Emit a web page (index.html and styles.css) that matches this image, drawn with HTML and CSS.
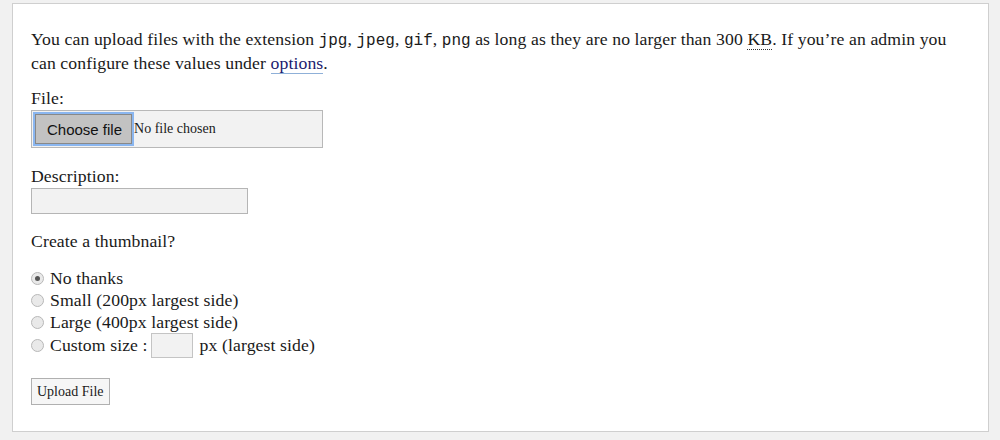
FILE: index.html
```html
<!DOCTYPE html>
<html>
<head>
<meta charset="utf-8">
<link rel="stylesheet" href="styles.css">
</head>
<body>
<div class="panel">
  <p class="intro">You can upload files with the extension <code>jpg</code>, <code>jpeg</code>, <code>gif</code>, <code>png</code> as long as they are no larger than 300 <abbr title="Kilobytes">KB</abbr>. If you’re an admin you<br>can configure these values under <a href="#">options</a>.</p>
  <div class="field field-file">
    <div class="label">File:</div>
    <div class="file-box"><span class="file-btn">Choose file</span><span class="file-name">No file chosen</span></div>
  </div>
  <div class="field field-desc">
    <div class="label">Description:</div>
    <div class="text-input"></div>
  </div>
  <div class="question">Create a thumbnail?</div>
  <div class="radios">
    <div class="radio-row"><span class="radio checked"></span>No thanks</div>
    <div class="radio-row"><span class="radio"></span>Small (200px largest side)</div>
    <div class="radio-row"><span class="radio"></span>Large (400px largest side)</div>
    <div class="radio-row"><span class="radio"></span>Custom size : <span class="size-input"></span>px (largest side)</div>
  </div>
  <div class="submit">Upload File</div>
</div>
</body>
</html>
```
FILE: styles.css
```css
html, body { margin: 0; padding: 0; }
body {
  background: #f1f1f1;
  font-family: "Liberation Serif", "DejaVu Serif", serif;
  font-size: 17.7px;
  letter-spacing: 0.1px;
  color: #1a1a1a;
  padding: 3px 11px 0 12px;
  height: 440px;
  box-sizing: border-box;
}
.panel {
  background: #fff;
  border: 1px solid #cfcfcf;
  height: 429px;
  box-sizing: border-box;
  padding: 24px 18px 0 18px;
}
.intro {
  margin: 0;
  line-height: 22px;
  white-space: nowrap;
}
code {
  font-family: "Liberation Mono", monospace;
  font-size: 16px;
  letter-spacing: 0;
}
abbr {
  text-decoration: none;
  border-bottom: 1px dotted #333;
}
a {
  color: #1b1b6e;
  text-decoration: none;
  border-bottom: 1px solid #8fb0d8;
}
.field-file { margin-top: 13px; }
.field-file .label { margin-bottom: 1px; }
.field-desc { margin-top: 17px; }
.label { line-height: 22px; }
.file-box {
  display: flex;
  align-items: center;
  width: 292px;
  height: 38px;
  box-sizing: border-box;
  background: #f2f2f2;
  border: 1px solid #b8b8b8;
  padding-left: 2px;
}
.file-btn {
  font-family: "Liberation Sans", sans-serif;
  font-size: 15px;
  letter-spacing: 0;
  background: #c2c2c2;
  border: 1px solid #888;
  box-shadow: 0 0 0 2px #8ab6f0;
  height: 30px;
  line-height: 30px;
  padding: 0 9px 0 11px;
  box-sizing: border-box;
  color: #111;
  margin-left: 1px;
}
.file-name {
  font-size: 14px;
  letter-spacing: 0;
  margin-left: 2px;
}
.text-input {
  width: 217px;
  height: 26px;
  box-sizing: border-box;
  background: #f2f2f2;
  border: 1px solid #b5b5b5;
  margin-top: 1px;
}
.question {
  margin-top: 16px;
  line-height: 22px;
}
.radios { margin-top: 15px; }
.radio-row {
  display: flex;
  align-items: center;
  height: 22px;
}
.radio-row:last-child { height: 24px; }
.radio {
  width: 11px;
  height: 11px;
  border-radius: 50%;
  border: 1px solid #b8b8b8;
  background: #e9e9e9;
  margin: 0 6px 0 0;
  box-sizing: content-box;
  position: relative;
}
.radio.checked::after {
  content: "";
  position: absolute;
  left: 3px;
  top: 3px;
  width: 5px;
  height: 5px;
  border-radius: 50%;
  background: #555;
}
.size-input {
  display: inline-block;
  width: 42px;
  height: 25px;
  box-sizing: border-box;
  background: #f2f2f2;
  border: 1px solid #c4c4c4;
  margin: 0 7px 0 3px;
}
.submit {
  display: inline-block;
  margin-top: 21px;
  font-size: 14px;
  letter-spacing: 0;
  border: 1px solid #b0b0b0;
  background: #f6f6f6;
  padding: 0 5px;
  height: 27px;
  line-height: 25px;
  box-sizing: border-box;
}
```
